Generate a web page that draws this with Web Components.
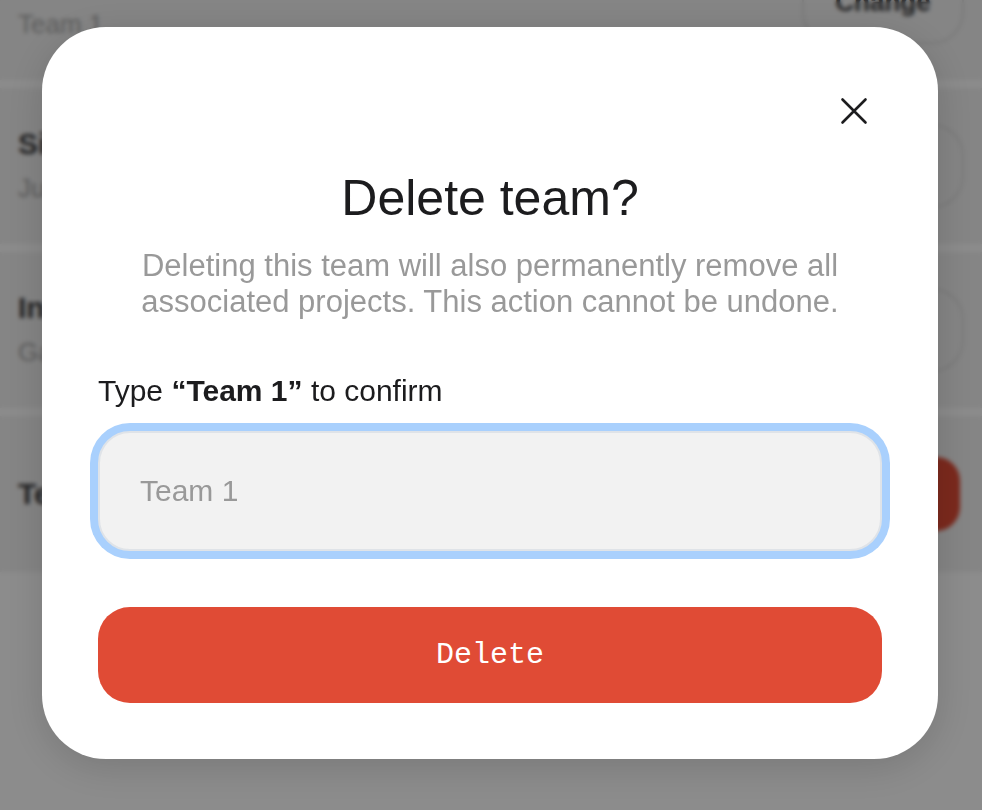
<!DOCTYPE html>
<html lang="en">
<head>
<meta charset="utf-8">
<meta name="viewport" content="width=device-width, initial-scale=1">
<title>Delete team</title>
<style>
    body {
        margin: 0;
        height: 100vh;
        overflow: hidden;
        background: #fff;
        color: #1c1c1e;
        font-family: "Liberation Sans", Arial, sans-serif;
        font-size: 31px;
        --danger: #e04b35;
        --surface: #f2f2f2;
        --muted: #999;
    }
</style>
</head>
<body>
<settings-list inert>
    <settings-row action="Change">&nbsp;<span slot="detail">Team 1</span></settings-row>
    <settings-row action="">Si<span slot="detail">Ju</span></settings-row>
    <settings-row action="">In<span slot="detail">Ga</span></settings-row>
    <settings-row action="" danger>Te</settings-row>
</settings-list>

<modal-dialog>
    <span slot="title">Delete team?</span>
    <span slot="description">Deleting this team will also permanently remove all associated projects. This action cannot be undone.</span>
    <confirm-form name="Team 1"></confirm-form>
</modal-dialog>

<script>
class SettingsList extends HTMLElement {
    constructor() {
        super();
        this.attachShadow({ mode: 'open' });
        this.shadowRoot.innerHTML = `
            <style>
                /* the list is scrolled, its first row is cut by the window */
                :host {
                    display: flex;
                    flex-direction: column;
                    gap: 8px;
                    margin-top: -76px;
                }
            </style>
            <slot></slot>
        `;
    }
}

class SettingsRow extends HTMLElement {
    connectedCallback() {
        if (!this.shadowRoot) this.attachShadow({ mode: 'open' });
        const action = this.getAttribute('action') || '';

        this.shadowRoot.innerHTML = `
            <style>
                :host {
                    display: flex;
                    align-items: center;
                    justify-content: space-between;
                    box-sizing: border-box;
                    height: 156px;
                    padding: 0 18px;
                    background: var(--surface);
                    color: #3c3c3e;
                    font-size: 30px;
                    line-height: 44px;
                }

                .title {
                    font-weight: 700;
                }

                .detail {
                    color: #a6a6a6;
                    font-size: 26px;
                }

                button {
                    box-sizing: border-box;
                    width: 162px;
                    height: 84px;
                    padding: 0;
                    border: 2px solid #dedede;
                    border-radius: 32px;
                    background: none;
                    color: inherit;
                    font: inherit;
                    font-size: 26px;
                    font-weight: 700;
                }

                :host([danger]) button {
                    height: 74px;
                    margin-right: 4px;
                    border: 0;
                    border-radius: 24px;
                    background: var(--danger);
                }
            </style>
            <div>
                <div class="title"><slot></slot></div>
                <div class="detail"><slot name="detail"></slot></div>
            </div>
            <button type="button" aria-label="Change">${action}</button>
        `;
    }
}

class ModalDialog extends HTMLElement {
    constructor() {
        super();
        this.attachShadow({ mode: 'open' });
        this.shadowRoot.innerHTML = `
            <style>
                :host {
                    position: fixed;
                    inset: 0;
                    box-sizing: border-box;
                    padding: 27px 44px 0 42px;
                    background: rgba(0, 0, 0, 0.45);
                    backdrop-filter: blur(2px);
                }

                .panel {
                    display: flex;
                    flex-direction: column;
                    padding: 56px;
                    border-radius: 64px;
                    background: #fff;
                    box-shadow: 0 8px 40px rgba(0, 0, 0, 0.15);
                }

                .close {
                    display: flex;
                    align-items: center;
                    justify-content: center;
                    align-self: flex-end;
                    width: 56px;
                    height: 56px;
                    padding: 0;
                    border: 0;
                    background: none;
                    color: inherit;
                }

                h1 {
                    margin: 29px 0 20px;
                    font-size: 50px;
                    font-weight: 400;
                    line-height: 60px;
                    text-align: center;
                }

                p {
                    margin: 0 40px 51px;
                    color: var(--muted);
                    line-height: 36px;
                    text-align: center;
                }
            </style>
            <section class="panel" role="dialog" aria-modal="true" aria-labelledby="title">
                <button class="close" type="button" aria-label="Close">
                    <svg width="28" height="28" viewBox="0 0 28 28" fill="none" stroke="currentColor" stroke-width="2.6" stroke-linecap="round">
                        <path d="M2.5 2.5 25.5 25.5M25.5 2.5 2.5 25.5"/>
                    </svg>
                </button>
                <h1 id="title"><slot name="title"></slot></h1>
                <p><slot name="description"></slot></p>
                <slot></slot>
            </section>
        `;
    }
}

class ConfirmForm extends HTMLElement {
    connectedCallback() {
        if (!this.shadowRoot) this.attachShadow({ mode: 'open' });
        const name = this.getAttribute('name') || '';

        this.shadowRoot.innerHTML = `
            <style>
                :host {
                    display: block;
                }

                form {
                    display: flex;
                    flex-direction: column;
                }

                label {
                    margin-bottom: 20px;
                    font-size: 30px;
                    line-height: 40px;
                }

                input {
                    box-sizing: border-box;
                    width: 100%;
                    height: 120px;
                    margin: 0 0 56px;
                    padding: 0 40px;
                    border: 2px solid #dfe3e8;
                    border-radius: 32px;
                    outline: 0;
                    background: var(--surface);
                    box-shadow: 0 0 0 8px #a9d0fd;
                    color: inherit;
                    font: inherit;
                    font-size: 30px;
                }

                input::placeholder {
                    color: var(--muted);
                    opacity: 1;
                }

                button {
                    height: 96px;
                    border: 0;
                    border-radius: 32px;
                    background: var(--danger);
                    color: #fff;
                    font-family: "Liberation Mono", "Courier New", monospace;
                    font-size: 30px;
                }
            </style>
            <form>
                <label for="confirm">Type <b>“${name}”</b> to confirm</label>
                <input id="confirm" type="text" placeholder="${name}" autocomplete="off">
                <button type="submit">Delete</button>
            </form>
        `;

        this.shadowRoot.querySelector('form').addEventListener('submit', (e) => e.preventDefault());
    }
}

customElements.define('settings-list', SettingsList);
customElements.define('settings-row', SettingsRow);
customElements.define('modal-dialog', ModalDialog);
customElements.define('confirm-form', ConfirmForm);
</script>
</body>
</html>
